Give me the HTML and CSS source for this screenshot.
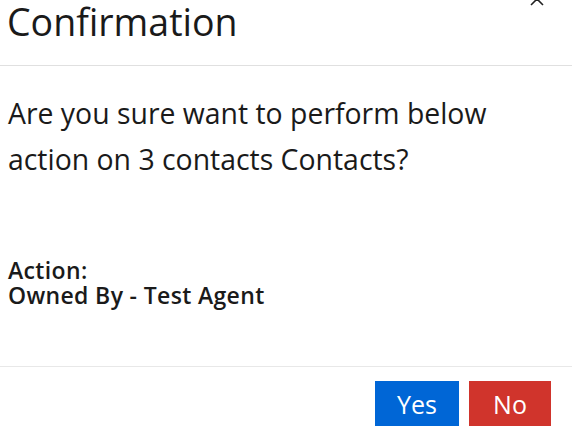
FILE: index.html
```html
<!DOCTYPE html>
<html>
<head>
<meta charset="utf-8">
<link rel="stylesheet" href="styles.css">
</head>
<body>
<div class="dialog">
  <div class="header">
    <h1 class="title">Confirmation</h1>
    <button class="close" aria-label="Close">
      <svg width="14" height="14" viewBox="0 0 14 14"><path d="M1 1 L13 13 M13 1 L1 13" stroke="#222" stroke-width="1.6" fill="none"/></svg>
    </button>
  </div>
  <div class="content">
    <p class="question">Are you sure want to perform below action on 3 contacts Contacts?</p>
    <div class="action">
      <div class="action-line">Action:</div>
      <div class="action-line">Owned By - Test Agent</div>
    </div>
  </div>
  <div class="footer">
    <button class="btn yes">Yes</button>
    <button class="btn no">No</button>
  </div>
</div>
</body>
</html>
```
FILE: styles.css
```css
html, body {
  margin: 0;
  padding: 0;
  background: #fff;
}
body {
  font-family: "Open Sans", "Noto Sans", sans-serif;
  color: #1a1a1a;
  width: 572px;
  height: 434px;
  overflow: hidden;
}
.dialog {
  display: flex;
  flex-direction: column;
}
.header {
  position: relative;
  height: 66px;
  border-bottom: 1px solid #e0e0e0;
  padding-left: 7px;
  box-sizing: border-box;
}
.title {
  margin: 0;
  font-weight: 400;
  font-size: 37.5px;
  line-height: 44px;
}
.close {
  position: absolute;
  right: 28px;
  top: -8px;
  border: none;
  background: none;
  padding: 0;
}
.content {
  padding: 24px 8px 0 8px;
  height: 301px;
  box-sizing: border-box;
  border-bottom: 1px solid #e8e8e8;
}
.question {
  margin: 0;
  font-size: 28.4px;
  line-height: 46px;
  width: 540px;
}
.action {
  margin-top: 76px;
  font-size: 23px;
  font-weight: 600;
  line-height: 25px;
  letter-spacing: 0.35px;
}
.footer {
  display: flex;
  justify-content: flex-end;
  gap: 10px;
  padding: 14px 21px 0 0;
}
.btn {
  border: none;
  color: #fff;
  font-family: inherit;
  font-size: 25px;
  height: 45px;
  padding: 0;
}
.yes { background: #0066d6; width: 84px; }
.no { background: #d0342c; width: 82px; }
```
